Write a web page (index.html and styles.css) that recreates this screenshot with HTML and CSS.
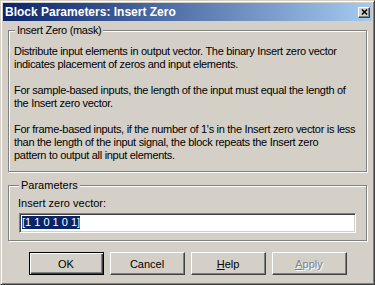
FILE: index.html
```html
<!DOCTYPE html>
<html lang="en">
<head>
    <meta charset="UTF-8">
    <title>Block Parameters: Insert Zero</title>
    <link rel="stylesheet" href="styles.css">
</head>
<body>

    <div class="window">
        <div class="titlebar">
            <span class="title">Block Parameters: Insert Zero</span>
            <span class="close">
                <svg width="8" height="7" viewBox="0 0 8 7">
                    <path d="M1 0.5 L7 6.5 M7 0.5 L1 6.5" stroke="#000" stroke-width="1.6" fill="none"/>
                </svg>
            </span>
        </div>

        <div class="content">
            <fieldset class="group desc">
                <legend>Insert Zero (mask)</legend>
                <p>Distribute input elements in output vector. The binary Insert zero vector<br>indicates placement of zeros and input elements.</p>
                <p>For sample-based inputs, the length of the input must equal the length of<br>the Insert zero vector.</p>
                <p>For frame-based inputs, if the number of 1's in the Insert zero vector is less<br>than the length of the input signal, the block repeats the Insert zero<br>pattern to output all input elements.</p>
            </fieldset>

            <fieldset class="group params">
                <legend>Parameters</legend>
                <div class="field-label">Insert zero vector:</div>
                <div class="edit"><span class="selected">[1 1 0 1 0 1]</span></div>
            </fieldset>

            <div class="buttons">
                <button class="btn default">OK</button>
                <button class="btn">Cancel</button>
                <button class="btn"><u>H</u>elp</button>
                <button class="btn disabled"><u>A</u>pply</button>
            </div>
        </div>
    </div>

</body>
</html>
```

FILE: styles.css
```css
* {
    margin: 0;
    padding: 0;
    box-sizing: border-box;
}

body {
    background-color: #d4d0c8;
    font-family: "Liberation Sans", Arial, sans-serif;
    font-size: 11px;
    color: #000;
}

.window {
    width: 375px;
    height: 285px;
    background: #d4d0c8;
    border: 1px solid;
    border-color: #d4d0c8 #404040 #404040 #d4d0c8;
    box-shadow: inset 1px 1px 0 #fff, inset -1px -1px 0 #808080;
    padding: 2px;
    display: flex;
    flex-direction: column;
}

/* barra de titulo */
.titlebar {
    height: 18px;
    display: flex;
    align-items: center;
    background: linear-gradient(to right, #0a246a, #a6caf0);
    padding-left: 2px;
}

.title {
    color: #fff;
    font-weight: bold;
    font-size: 12px;
    line-height: 18px;
}

.close {
    margin-left: auto;
    margin-right: 2px;
    width: 12px;
    height: 11px;
    background: #d4d0c8;
    border: 1px solid;
    border-color: #fff #404040 #404040 #fff;
    box-shadow: inset -1px -1px 0 #808080;
    display: flex;
    align-items: center;
    justify-content: center;
}

.close svg {
    display: block;
    width: 7px;
    height: 6px;
}

.content {
    flex: 1;
    padding: 0 5px;
}

/* group boxes */
.group {
    border: 1px solid #808080;
    box-shadow: 1px 1px 0 #fff, inset 1px 1px 0 #fff;
    min-width: 0;
}

.group legend {
    background: #d4d0c8;
    line-height: 13px;
    padding: 0 2px;
    margin-left: 1px;
}

.desc {
    margin-top: 3px;
    padding: 8px 5px 9px 5px;
    line-height: 13px;
    letter-spacing: -0.3px;
}

.desc p {
    margin-bottom: 13px;
    white-space: nowrap;
}

.desc p:last-child {
    margin-bottom: 0;
}

.params {
    margin-top: 7px;
    padding: 5px 10px 7px 9px;
}

.field-label {
    line-height: 13px;
}

.edit {
    margin-top: 3px;
    height: 20px;
    background: #fff;
    border: 1px solid;
    border-color: #808080 #fff #fff #808080;
    box-shadow: inset 1px 1px 0 #404040, inset -1px -1px 0 #d4d0c8;
    padding: 2px 2px 0 2px;
    margin-left: 1px;
    line-height: 13px;
}

.selected {
    background: #0a246a;
    color: #fff;
    display: inline-block;
    height: 13px;
}

/* botoes */
.buttons {
    margin-top: 11px;
    display: flex;
    justify-content: center;
    gap: 6px;
}

.btn {
    width: 75px;
    height: 23px;
    font-family: "Liberation Sans", Arial, sans-serif;
    font-size: 11px;
    color: #000;
    background: #d4d0c8;
    border: 1px solid;
    border-color: #fff #404040 #404040 #fff;
    box-shadow: inset -1px -1px 0 #808080;
}

.btn u {
    text-decoration: underline;
}

.btn.default {
    border: 1px solid #000;
    box-shadow: inset 1px 1px 0 #fff, inset -1px -1px 0 #404040, inset -2px -2px 0 #808080;
}

.btn.disabled {
    color: #808080;
    text-shadow: 1px 1px 0 #fff;
}
```
